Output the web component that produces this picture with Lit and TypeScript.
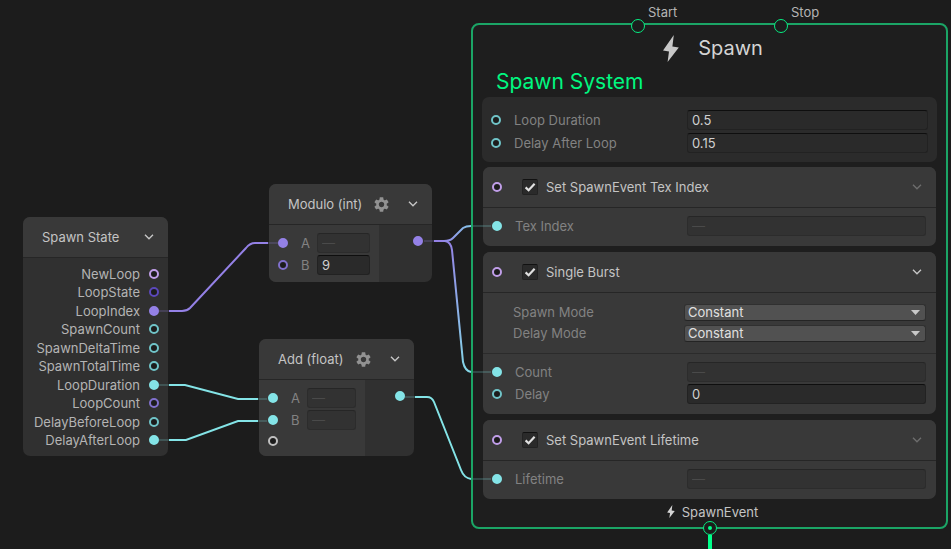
import { LitElement, html, css, svg, nothing } from "lit";
import { customElement, state } from "lit/decorators.js";
import { classMap } from "lit/directives/class-map.js";

type Tone = "bool" | "uint" | "int" | "float" | "any";

interface Slot {
  name: string;
  tone: Tone;
  linked?: boolean;
  value?: string;
}

interface Block {
  id: string;
  title: string;
  open: boolean;
  modes?: string[];
  slots: Slot[];
}

const spawnState: Slot[] = [
  { name: "NewLoop", tone: "bool" },
  { name: "LoopState", tone: "uint" },
  { name: "LoopIndex", tone: "int", linked: true },
  { name: "SpawnCount", tone: "float" },
  { name: "SpawnDeltaTime", tone: "float" },
  { name: "SpawnTotalTime", tone: "float" },
  { name: "LoopDuration", tone: "float", linked: true },
  { name: "LoopCount", tone: "int" },
  { name: "DelayBeforeLoop", tone: "float" },
  { name: "DelayAfterLoop", tone: "float", linked: true },
];

const loopSettings: Slot[] = [
  { name: "Loop Duration", tone: "float", value: "0.5" },
  { name: "Delay After Loop", tone: "float", value: "0.15" },
];

const blocks: Block[] = [
  {
    id: "tex",
    title: "Set SpawnEvent Tex Index",
    open: false,
    slots: [{ name: "Tex Index", tone: "float", linked: true }],
  },
  {
    id: "burst",
    title: "Single Burst",
    open: true,
    modes: ["Spawn Mode", "Delay Mode"],
    slots: [
      { name: "Count", tone: "float", linked: true },
      { name: "Delay", tone: "float", value: "0" },
    ],
  },
  {
    id: "life",
    title: "Set SpawnEvent Lifetime",
    open: false,
    slots: [{ name: "Lifetime", tone: "float", linked: true }],
  },
];

const chevron = html`<svg class="chevron" viewBox="0 0 10 6" aria-hidden="true">
  <path d="M1 .8 L5 4.8 L9 .8" fill="none" stroke="currentColor" stroke-width="1.4" />
</svg>`;

const gear = html`<svg class="gear" viewBox="-7.5 -7.5 15 15" aria-hidden="true">
  <circle r="4" fill="none" stroke="currentColor" stroke-width="2.6" />
  ${[0, 60, 120, 180, 240, 300].map(
    (a) => svg`<path d="M-2.1 -4.6 L-1.7 -7.2 H1.7 L2.1 -4.6 Z" fill="currentColor" transform="rotate(${a})" />`
  )}
</svg>`;

const bolt = (cls: string) => html`<svg class=${cls} viewBox="0 0 16 27" aria-hidden="true">
  <path d="M10.8 0 L0 15.6 L6 16.4 L4.6 27 L15.8 12.4 L9.4 11.6 Z" fill="currentColor" />
</svg>`;

const port = (tone: Tone, linked = false) =>
  html`<span class=${classMap({ port: true, [tone]: true, linked })}></span>`;

@customElement("app-root")
export class AppRoot extends LitElement {
  @state() private enabled: Record<string, boolean> = { tex: true, burst: true, life: true };

  static styles = css`
    :host {
      display: block;
      font: 13px/18px Inter, "Liberation Sans", sans-serif;
      color: #c4c4c4;
    }
    * {
      box-sizing: border-box;
    }
    .canvas {
      position: relative;
      min-height: 100vh;
      display: flow-root;
      overflow: hidden;
      background: #1c1c1c;
    }
    .edges {
      position: absolute;
      inset: 0;
      width: 100%;
      height: 100%;
      pointer-events: none;
      fill: none;
      stroke-width: 2;
    }
    .stub {
      opacity: 0.2;
    }
    .cyan {
      stroke: #84e4e7;
    }
    .violet {
      stroke: #9481e6;
    }

    /* ports */
    .port {
      flex: none;
      width: 10px;
      height: 10px;
      border-radius: 50%;
      border: 2px solid var(--tone);
      background: #1c1c1c;
    }
    .port.linked {
      background: var(--tone);
    }
    .bool {
      --tone: #c09ee8;
    }
    .uint {
      --tone: #5b48ba;
    }
    .int {
      --tone: #9481e6;
    }
    .float {
      --tone: #84e4e7;
    }
    .any {
      --tone: #c0c0c0;
    }
    .port:not(.linked).float {
      --tone: #70c4c8;
    }
    .port:not(.linked).int {
      --tone: #8070cc;
    }

    /* operator nodes */
    .node {
      position: absolute;
      border-radius: 7px;
      background: #303030;
      overflow: hidden;
    }
    .state {
      left: 23px;
      top: 217px;
      width: 145px;
    }
    .modulo {
      left: 269px;
      top: 184px;
      width: 163px;
    }
    .add {
      left: 259px;
      top: 339px;
      width: 155px;
    }
    .bar {
      display: flex;
      align-items: center;
      height: 41px;
      padding: 0 14px 0 19px;
      background: #393939;
      border-bottom: 1px solid #262626;
    }
    h1,
    h2,
    h3 {
      margin: 0;
      font: inherit;
    }
    .bar h3 {
      flex: 1;
      white-space: nowrap;
    }
    button {
      display: grid;
      place-items: center;
      padding: 0;
      border: 0;
      background: none;
      color: inherit;
    }
    .bar .cog {
      margin-right: 19px;
      color: #929292;
    }
    .gear {
      width: 15px;
      height: 15px;
    }
    .chevron {
      width: 10px;
      height: 6px;
    }
    .outputs {
      list-style: none;
      margin: 0;
      padding: 7px 9px 7px 0;
      min-height: 198px;
      display: grid;
      align-content: space-between;
    }
    .outputs li {
      display: flex;
      justify-content: flex-end;
      align-items: center;
      gap: 9px;
      color: #b4b4b4;
    }
    .io {
      display: flex;
    }
    .inputs {
      display: grid;
      gap: 2px;
      padding: 8px 9px 7px;
      background: #393939;
    }
    .input {
      display: flex;
      align-items: center;
      height: 20px;
      color: #828282;
    }
    .input label {
      width: 25px;
      padding-left: 9px;
    }
    .input .port {
      margin-right: 4px;
    }
    .input .field {
      width: 53px;
    }
    .add .input .field {
      width: 49px;
    }
    .input.spare {
      height: 17px;
    }
    .result {
      flex: 1;
      display: flex;
      justify-content: flex-end;
      padding: 11px 9px 0 0;
    }

    /* fields */
    .field {
      height: 20px;
      min-width: 0;
      padding: 0 4px;
      border: 1px solid #222;
      border-top-color: #0e0e0e;
      border-radius: 3px;
      background: #2a2a2a;
      color: #d0d0d0;
      font: inherit;
      outline: none;
    }
    .field:disabled {
      border-color: #2c2c2c;
      border-top-color: #262626;
      background: #323232;
      color: #4a4a4a;
    }

    /* spawn context */
    .context {
      position: relative;
      min-width: 400px;
      margin: 23px 3px 20px 471px;
      border: 2px solid #1ba566;
      border-radius: 8px;
      background: #1e1e1e;
      padding: 0 9px;
    }
    .flow {
      position: absolute;
      left: 0;
      right: 0;
      top: -6px;
      display: flex;
      justify-content: center;
      gap: 129px;
    }
    .anchor {
      position: relative;
      width: 14px;
      height: 14px;
      border: 1px solid #06ee82;
      border-radius: 50%;
      background: #1c1c1c;
    }
    .anchor span {
      position: absolute;
      left: 16px;
      bottom: 11px;
      color: #b4b4b4;
    }
    .exit {
      top: auto;
      bottom: -8px;
    }
    .exit .anchor::before {
      content: "";
      position: absolute;
      inset: 4px;
      border-radius: 50%;
      background: #00ff8a;
    }
    .exit .anchor::after {
      content: "";
      position: absolute;
      left: 4px;
      top: 13px;
      width: 4px;
      height: 100vh;
      background: #00ff8a;
    }
    .title {
      display: flex;
      justify-content: center;
      align-items: center;
      gap: 19px;
      height: 46px;
      padding-left: 7px;
      font-size: 20px;
      color: #d4d4d4;
    }
    .bolt {
      width: 16px;
      height: 27px;
      color: #c8c8c8;
    }
    .bolt-small {
      width: 8px;
      height: 13px;
      color: #d4d4d4;
    }
    .system {
      padding: 1px 14px 5px;
      font-size: 21px;
      line-height: 20px;
      color: #00f780;
    }
    .settings {
      display: grid;
      gap: 3px;
      padding: 13px 9px 9px;
      border-radius: 7px;
      background: #2b2b2b;
    }
    .blocks {
      display: grid;
      gap: 6px;
      padding: 5px 1px 0;
    }
    .block {
      border-radius: 7px;
      background: #393939;
      overflow: hidden;
    }
    .block .bar {
      padding: 0 14px 0 9px;
    }
    .block .closed {
      color: #6c6c6c;
    }
    .toggle {
      flex: 1;
      display: flex;
      align-items: center;
      gap: 8px;
      margin-left: 20px;
    }
    .tick {
      position: relative;
      display: grid;
    }
    .tick input {
      appearance: none;
      width: 16px;
      height: 16px;
      margin: 0;
      border: 1px solid #222;
      border-top-color: #111;
      border-radius: 2px;
      background: #2a2a2a;
    }
    .tick svg {
      position: absolute;
      inset: 0;
      width: 16px;
      height: 16px;
      pointer-events: none;
    }
    .modes {
      display: grid;
      gap: 4px;
      padding: 11px 10px 11px 30px;
      border-bottom: 1px solid #2b2b2b;
    }
    .slots {
      display: grid;
      gap: 2px;
      padding: 8px 10px 10px 9px;
    }
    .row {
      display: grid;
      grid-template-columns: 10px 1fr 241px;
      align-items: center;
      color: #828282;
    }
    .row label {
      padding-left: 13px;
    }
    .slots .row {
      grid-template-columns: 10px 1fr 239px;
    }
    .modes .row {
      grid-template-columns: 1fr 242px;
    }
    .modes .row label {
      padding: 0;
      line-height: 17px;
    }
    .select {
      position: relative;
      display: grid;
    }
    select {
      appearance: none;
      height: 17px;
      padding: 0 20px 0 3px;
      border: 1px solid #303030;
      border-bottom-color: #242424;
      border-radius: 3px;
      background: #515151;
      color: #e0e0e0;
      font: inherit;
      line-height: 15px;
    }
    .arrow {
      position: absolute;
      right: 6px;
      top: 6px;
      width: 9px;
      height: 5px;
      fill: #c8c8c8;
      pointer-events: none;
    }
    .event {
      display: flex;
      justify-content: center;
      align-items: center;
      gap: 7px;
      height: 28px;
      padding: 0 0 3px 6px;
    }
  `;

  private field(id: string, slot: Slot) {
    return html`<input
      class="field"
      id=${id}
      type="text"
      ?disabled=${slot.linked}
      .value=${slot.linked ? "—" : slot.value ?? ""}
    />`;
  }

  private row(prefix: string, slot: Slot, i: number) {
    const id = `${prefix}-${i}`;
    return html`<div class="row">
      ${port(slot.tone, slot.linked)}
      <label for=${id}>${slot.name}</label>
      ${this.field(id, slot)}
    </div>`;
  }

  private operator(cls: string, title: string, tone: Tone, inputs: Slot[], spare = false) {
    return html`<section class="node ${cls}">
      <header class="bar">
        <h3>${title}</h3>
        <button class="cog" aria-label="Settings">${gear}</button>
        <button aria-label="Collapse">${chevron}</button>
      </header>
      <div class="io">
        <div class="inputs">
          ${inputs.map(
            (s, i) => html`<div class="input">
              ${port(s.tone, s.linked)}
              <label for="${cls}-${i}">${s.name}</label>
              ${this.field(`${cls}-${i}`, s)}
            </div>`
          )}
          ${spare ? html`<div class="input spare">${port("any")}</div>` : nothing}
        </div>
        <div class="result">${port(tone, true)}</div>
      </div>
    </section>`;
  }

  private block(b: Block) {
    return html`<section class="block">
      <header class="bar">
        ${port("bool")}
        <label class="toggle">
          <span class="tick">
            <input
              type="checkbox"
              .checked=${this.enabled[b.id]}
              @change=${(e: Event) =>
                (this.enabled = { ...this.enabled, [b.id]: (e.target as HTMLInputElement).checked })}
            />
            ${this.enabled[b.id]
              ? html`<svg viewBox="0 0 16 16" aria-hidden="true">
                  <path d="M3.6 8.4 L6.6 11.2 L12.6 4.8" fill="none" stroke="#e0e0e0" stroke-width="2.2" />
                </svg>`
              : nothing}
          </span>
          ${b.title}
        </label>
        <button class=${classMap({ closed: !b.open })} aria-label="Expand ${b.title}">${chevron}</button>
      </header>
      ${b.modes
        ? html`<div class="modes">
            ${b.modes.map(
              (m, i) => html`<div class="row">
                <label for="mode-${i}">${m}</label>
                <span class="select">
                  <select id="mode-${i}">
                    <option>Constant</option>
                    <option>Random</option>
                  </select>
                  <svg class="arrow" viewBox="0 0 9 5" aria-hidden="true"><path d="M0 0 H9 L4.5 5 Z" /></svg>
                </span>
              </div>`
            )}
          </div>`
        : nothing}
      <div class="slots">${b.slots.map((s, i) => this.row(b.id, s, i))}</div>
    </section>`;
  }

  render() {
    return html`<main class="canvas">
      <section class="node state">
        <header class="bar">
          <h3>Spawn State</h3>
          <button aria-label="Collapse">${chevron}</button>
        </header>
        <ul class="outputs">
          ${spawnState.map((s) => html`<li>${s.name}${port(s.tone, s.linked)}</li>`)}
        </ul>
      </section>

      ${this.operator("modulo", "Modulo (int)", "int", [
        { name: "A", tone: "int", linked: true },
        { name: "B", tone: "int", value: "9" },
      ])}
      ${this.operator(
        "add",
        "Add (float)",
        "float",
        [
          { name: "A", tone: "float", linked: true },
          { name: "B", tone: "float", linked: true },
        ],
        true
      )}

      <section class="context">
        <div class="flow">
          <div class="anchor"><span>Start</span></div>
          <div class="anchor"><span>Stop</span></div>
        </div>
        <h1 class="title">${bolt("bolt")}Spawn</h1>
        <h2 class="system">Spawn System</h2>
        <div class="settings">${loopSettings.map((s, i) => this.row("loop", s, i))}</div>
        <div class="blocks">${blocks.map((b) => this.block(b))}</div>
        <div class="event">${bolt("bolt-small")}SpawnEvent</div>
        <div class="flow exit"><div class="anchor"></div></div>
      </section>

      <svg class="edges" aria-hidden="true">
        <defs>
          <linearGradient id="toTex" gradientUnits="userSpaceOnUse" x1="440" y1="241" x2="471" y2="226">
            <stop offset="0" stop-color="#9481e6" />
            <stop offset="1" stop-color="#86c4e8" />
          </linearGradient>
          <linearGradient id="toCount" gradientUnits="userSpaceOnUse" x1="440" y1="241" x2="471" y2="372">
            <stop offset="0" stop-color="#9481e6" />
            <stop offset="1" stop-color="#84d8e7" />
          </linearGradient>
        </defs>
        <path class="violet" d="M169 311 H182 Q187 311 190 308 L246 248 Q250 243 255 243 H268" />
        <path class="cyan" d="M169 385 H185 L238 399 H258" />
        <path class="cyan" d="M169 440 H186 L238 421 H258" />
        <path stroke="url(#toCount)" d="M434 241 H445 Q451 242 452 250 L463 362 Q465 371 471 372" />
        <path stroke="url(#toTex)" d="M434 241 H444 Q450 241 453 238 L463 228 Q466 226 471 226" />
        <path class="cyan" d="M415 397 H427 Q432 397 434 402 L461 470 Q464 478 471 479" />
        <path class="stub violet" d="M159 311 H169 M268 243 H278 M424 241 H434" />
        <path class="stub cyan" d="M159 385 H169 M159 440 H169 M258 399 H267 M258 421 H267 M405 397 H415" />
        <path class="stub cyan" d="M473 226 H491 M473 372 H491 M473 479 H491" />
      </svg>
    </main>`;
  }
}
